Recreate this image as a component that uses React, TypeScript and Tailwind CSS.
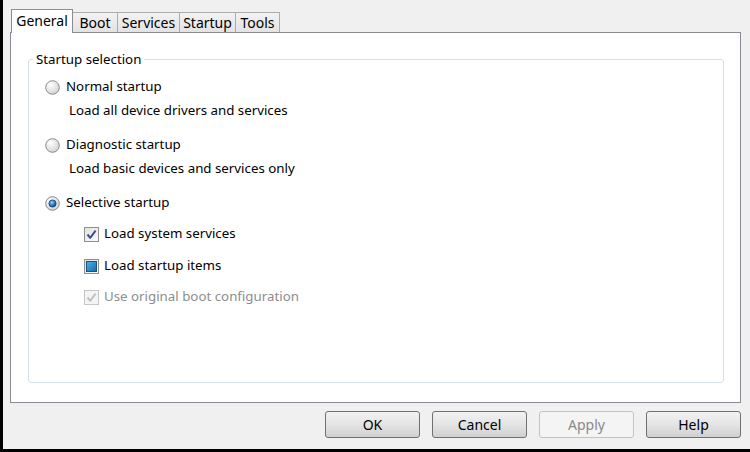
import { ReactNode } from "react";

const font = { fontFamily: "'Noto Sans', 'DejaVu Sans', sans-serif" };

function Radio({ checked }: { checked?: boolean }) {
  return (
    <svg width="15" height="15" viewBox="0 0 15 15" className="shrink-0">
      <defs>
        <radialGradient id={checked ? "rg-on" : "rg-off"} cx="35%" cy="30%" r="80%">
          <stop offset="0" stopColor="#ffffff" />
          <stop offset="1" stopColor="#cfcfcf" />
        </radialGradient>
        <radialGradient id="rg-dot" cx="40%" cy="35%" r="70%">
          <stop offset="0" stopColor="#8fd6ff" />
          <stop offset="0.6" stopColor="#1a7cc7" />
          <stop offset="1" stopColor="#0c3f7a" />
        </radialGradient>
      </defs>
      <circle cx="7.5" cy="7.5" r="6.8" fill={`url(#${checked ? "rg-on" : "rg-off"})`} stroke="#8a8a8a" strokeWidth="1" />
      {checked && <circle cx="7.5" cy="7.5" r="3.6" fill="url(#rg-dot)" stroke="#1d3c6a" strokeWidth="0.8" />}
    </svg>
  );
}

function Check({ state }: { state: "checked" | "mixed" | "disabled" }) {
  const disabled = state === "disabled";
  return (
    <div
      className={`w-[15px] h-[15px] shrink-0 border flex items-center justify-center ${
        disabled ? "border-[#c6c6c6] bg-[#f4f4f4]" : "border-[#8e8f8f] bg-gradient-to-br from-[#e2e2e2] to-[#fafafa]"
      }`}
    >
      {state === "mixed" && (
        <div className="w-[11px] h-[11px] border border-[#1c5180] bg-gradient-to-br from-[#49b1e6] to-[#1a6ea8]" />
      )}
      {state !== "mixed" && (
        <svg width="11" height="11" viewBox="0 0 11 11">
          <path
            d="M1.5 5.5 L4.2 8.8 L9.6 1.6"
            fill="none"
            stroke={disabled ? "#c2c2c2" : "#3f4f8c"}
            strokeWidth="2"
            strokeLinejoin="round"
          />
        </svg>
      )}
    </div>
  );
}

function Tab({ label, active, w }: { label: string; active?: boolean; w: string }) {
  if (active) {
    return (
      <div className={`${w} h-[24px] -mb-px bg-white border border-b-0 border-[#898c95] text-center text-[14px] leading-[22px] text-black relative z-10`}>
        {label}
      </div>
    );
  }
  return (
    <div className={`${w} h-[20px] border border-l-0 border-b-0 border-[#acacac] bg-gradient-to-b from-[#f2f2f2] to-[#e3e3e3] text-center text-[14px] leading-[19px] text-black`}>
      {label}
    </div>
  );
}

function Button({ children, disabled }: { children: ReactNode; disabled?: boolean }) {
  return (
    <button
      disabled={disabled}
      className={`w-[95px] h-[27px] rounded-[3px] border text-[14px] ${
        disabled
          ? "border-[#c1c4c7] bg-[#f4f4f4] text-[#8a8a8a]"
          : "border-[#707070] bg-gradient-to-b from-[#f2f2f2] via-[#e4e4e4] to-[#d0d0d0] text-black"
      }`}
    >
      {children}
    </button>
  );
}

export default function App() {
  return (
    <div
      style={font}
      className="w-[750px] h-[452px] bg-[#f0f0f0] border-l-[3px] border-b-[3px] border-black flex flex-col"
    >
      {/* tabs */}
      <div className="flex items-end pl-[8px] pt-[9px]">
        <Tab label="General" active w="w-[62px]" />
        <Tab label="Boot" w="w-[45px]" />
        <Tab label="Services" w="w-[62px]" />
        <Tab label="Startup" w="w-[56px]" />
        <Tab label="Tools" w="w-[44px]" />
      </div>

      {/* panel */}
      <div className="ml-[7px] w-[731px] h-[371px] bg-white border border-[#898c95] pt-[18px] pl-[17px] pr-[16px] pb-[19px]">
        <fieldset className="h-full border border-[#d5dfe5] rounded-[3px] pl-[16px]">
          <legend className="-ml-[12px] px-[3px] text-[13.3px] leading-[17px] text-black">Startup selection</legend>

          <div className="pt-[9px] text-[13.3px] text-black">
            <div className="flex items-center gap-[6px] h-[20px]">
              <Radio />
              <span>Normal startup</span>
            </div>
            <div className="pl-[24px] h-[20px] mt-[3px] leading-[20px]">Load all device drivers and services</div>

            <div className="flex items-center gap-[6px] h-[20px] mt-[15px]">
              <Radio />
              <span>Diagnostic startup</span>
            </div>
            <div className="pl-[24px] h-[20px] mt-[3px] leading-[20px]">Load basic devices and services only</div>

            <div className="flex items-center gap-[6px] h-[20px] mt-[15px]">
              <Radio checked />
              <span>Selective startup</span>
            </div>

            <div className="pl-[39px] mt-[11px] flex flex-col gap-[12px]">
              <div className="flex items-center gap-[5px] h-[20px]">
                <Check state="checked" />
                <span>Load system services</span>
              </div>
              <div className="flex items-center gap-[5px] h-[20px]">
                <Check state="mixed" />
                <span>Load startup items</span>
              </div>
              <div className="flex items-center gap-[5px] h-[20px] -mt-[1px]">
                <Check state="disabled" />
                <span className="text-[#8d8d8d]">Use original boot configuration</span>
              </div>
            </div>
          </div>
        </fieldset>
      </div>

      {/* buttons */}
      <div className="flex justify-end gap-[12px] pr-[9px] mt-[8px]">
        <Button>OK</Button>
        <Button>Cancel</Button>
        <Button disabled>Apply</Button>
        <Button>Help</Button>
      </div>
    </div>
  );
}
